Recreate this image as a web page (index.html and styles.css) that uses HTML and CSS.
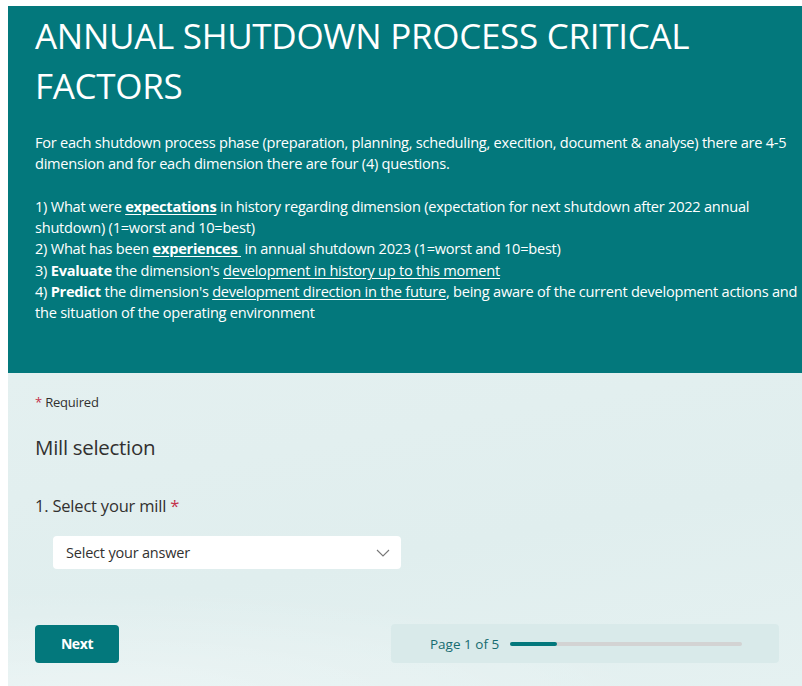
FILE: index.html
```html
<!DOCTYPE html>
<html lang="en">
<head>
<meta charset="utf-8">
<title>Annual shutdown process critical factors</title>
<link rel="stylesheet" href="styles.css">
</head>
<body>
<div class="page">
  <header class="form-header">
    <h1 class="form-title">ANNUAL SHUTDOWN PROCESS CRITICAL<br>FACTORS</h1>
    <div class="form-desc">
      <p>For each shutdown process phase (preparation, planning, scheduling, execition, document &amp; analyse) there are 4-5<br>dimension and for each dimension there are four (4) questions.</p>
      <p>1) What were <b><u>expectations</u></b> in history regarding dimension (expectation for next shutdown after 2022 annual<br>shutdown) (1=worst and 10=best)<br>
      2) What has been <b><u>experiences&nbsp;</u></b> in annual shutdown 2023 (1=worst and 10=best)<br>
      3) <b>Evaluate</b> the dimension's <u>development in history up to this moment</u><br>
      4) <b>Predict</b> the dimension's <u>development direction in the future</u>, being aware of the current development actions and<br>the situation of the operating environment</p>
    </div>
  </header>
  <main class="form-body">
    <div class="required-note"><span class="star">*</span> Required</div>
    <h2 class="section-title">Mill selection</h2>
    <div class="question">
      <div class="question-title">1. Select your mill <span class="star">*</span></div>
      <div class="dropdown">
        <span>Select your answer</span>
        <svg class="chevron" width="14" height="8" viewBox="0 0 14 8"><path d="M1 1l6 6 6-6" fill="none" stroke="#777" stroke-width="1.1"/></svg>
      </div>
    </div>
    <div class="form-footer">
      <button class="next-btn">Next</button>
      <div class="progress-box">
        <span class="page-label">Page 1 of 5</span>
        <div class="track"><div class="fill" style="width:20%"></div></div>
      </div>
    </div>
  </main>
</div>
</body>
</html>
```

FILE: styles.css
```css
* { box-sizing: border-box; }

html, body {
  margin: 0;
  background: #fff;
}

body {
  font-family: "Open Sans", "Noto Sans", sans-serif;
  color: #323130;
}

.page {
  padding: 6px 0 0 8px;
  width: 802px;
  height: 686px;
  overflow: hidden;
}

.form-header {
  background: #03787c;
  color: #fff;
  height: 367px;
  padding: 5px 0 0 27px;
}

.form-title {
  margin: 0;
  font-weight: 400;
  font-size: 35px;
  line-height: 50px;
  letter-spacing: -0.3px;
  white-space: nowrap;
}

.form-desc {
  margin-top: 21px;
  font-size: 14.6px;
  line-height: 21.3px;
  letter-spacing: -0.25px;
  white-space: nowrap;
}

.form-desc p { margin: 0 0 21.3px; }
.form-desc p:last-child { margin: 0; }
.form-desc u { text-underline-offset: 2px; }

.form-body {
  height: 313px;
  padding: 20px 23px 0 27px;
  background:
    radial-gradient(120% 60% at 10% 105%, rgba(255,255,255,0.35) 0%, rgba(255,255,255,0) 60%),
    linear-gradient(170deg, #e4f0f0 0%, #e0eeee 55%, #e5f1f1 100%);
}

.required-note {
  font-size: 13px;
  line-height: 18px;
  color: #323130;
  letter-spacing: -0.2px;
}

.star { color: #c4314b; }

.section-title {
  margin: 22px 0 0;
  font-weight: 400;
  font-size: 20.5px;
  line-height: 28px;
  color: #323130;
  letter-spacing: -0.3px;
}

.question { margin-top: 34px; }

.question-title {
  font-size: 16.5px;
  line-height: 22px;
  letter-spacing: -0.2px;
}

.dropdown {
  margin: 19px 0 0 18px;
  width: 348px;
  height: 33px;
  background: #fff;
  border-radius: 4px;
  display: flex;
  align-items: center;
  justify-content: space-between;
  padding: 0 11px 0 13px;
  font-size: 14.5px;
  letter-spacing: -0.2px;
  color: #323130;
}

.form-footer {
  margin-top: 55px;
  display: flex;
  align-items: center;
  justify-content: space-between;
}

.next-btn {
  width: 84px;
  height: 38px;
  border: 0;
  border-radius: 4px;
  background: #03787c;
  color: #fff;
  font-family: inherit;
  font-weight: 700;
  font-size: 14px;
  letter-spacing: -0.4px;
}

.progress-box {
  width: 388px;
  height: 39px;
  border-radius: 4px;
  background: #d9eaea;
  display: flex;
  align-items: center;
  padding-left: 39px;
  gap: 11px;
}

.page-label {
  font-size: 13.5px;
  color: #166c70;
  letter-spacing: 0;
}

.track {
  width: 232px;
  height: 4px;
  background: #d3d3d3;
  border-radius: 2px;
}

.fill {
  height: 100%;
  background: #03787c;
  border-radius: 2px;
}
```
